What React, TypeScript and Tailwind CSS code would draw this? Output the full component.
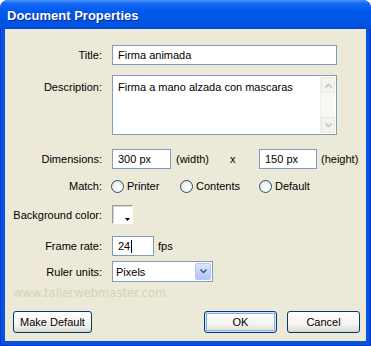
import React from 'react'

const ui = "font-['Liberation_Sans',Arial,sans-serif] text-[11px] text-black"

function Label({ children, top }: { children: React.ReactNode; top?: boolean }) {
  return (
    <div className={`w-[97px] shrink-0 text-right leading-[14px] ${top ? 'self-start pt-[5px]' : ''}`}>
      {children}
    </div>
  )
}

function TextBox({ value, w, caret }: { value: string; w: string; caret?: boolean }) {
  return (
    <div className={`${w} h-[20px] border border-[#7F9DB9] bg-white pl-[5px] flex items-center leading-[14px]`}>
      {value}
      {caret && <span className="inline-block w-px h-[13px] bg-black ml-px" />}
    </div>
  )
}

function Radio({ label, w }: { label: string; w: string }) {
  return (
    <div className={`${w} flex items-center`}>
      <span className="w-[13px] h-[13px] rounded-full border border-[#1C5180] bg-[radial-gradient(circle_at_65%_65%,#ffffff_0%,#f2f1ea_55%,#d4d2c6_100%)]" />
      <span className="ml-[3px] leading-[14px]">{label}</span>
    </div>
  )
}

function Chevron({ up, color }: { up?: boolean; color: string }) {
  return (
    <svg width="7" height="5" viewBox="0 0 7 5">
      <path
        d={up ? 'M0.5 4.5 L3.5 1.5 L6.5 4.5' : 'M0.5 0.5 L3.5 3.5 L6.5 0.5'}
        fill="none"
        stroke={color}
        strokeWidth="1.6"
      />
    </svg>
  )
}

function Button({ label, w, def }: { label: string; w: string; def?: boolean }) {
  return (
    <div
      className={`${w} h-[22px] rounded-[3px] border border-[#003C74] flex items-center justify-center bg-[linear-gradient(to_bottom,#ffffff_0%,#f4f4f0_60%,#e3e2da_90%,#d6d0c5_100%)] ${
        def ? 'shadow-[inset_0_0_0_1px_#CEE7FF,inset_0_0_0_2px_#8FA9EC]' : ''
      }`}
    >
      {label}
    </div>
  )
}

export default function App() {
  return (
    <div className={`w-[371px] h-[346px] flex flex-col rounded-t-[8px] overflow-hidden bg-[#0055E5] ${ui}`}>
      {/* Title bar */}
      <div className="h-[29px] shrink-0 flex items-center pt-[3px] pl-[7px] bg-[linear-gradient(to_bottom,#4A94F8_0%,#1668F2_12%,#0058EC_40%,#0054E3_80%,#0049D8_100%)]">
        <span className="font-['Liberation_Sans',Arial,sans-serif] font-bold text-[13px] text-white [text-shadow:1px_1px_0_#0A2A8E]">
          Document Properties
        </span>
      </div>

      <div className="flex-1 flex px-[4px] pb-[4px] border-x border-b border-[#0032C8]">
        <div className="flex-1 bg-[#ECE9D8] flex flex-col pt-[16px]">
          {/* Title */}
          <div className="flex items-center">
            <Label>Title:</Label>
            <div className="ml-[10px]">
              <TextBox value="Firma animada" w="w-[225px]" />
            </div>
          </div>

          {/* Description */}
          <div className="flex mt-[10px]">
            <Label top>Description:</Label>
            <div className="ml-[10px] w-[225px] h-[60px] border border-[#7F9DB9] bg-white flex">
              <div className="flex-1 pl-[5px] pt-[4px] leading-[14px]">Firma a mano alzada con mascaras</div>
              <div className="w-[15px] flex flex-col bg-[#F8F8F4] border-l border-[#F1EFE6] m-px">
                <div className="h-[16px] rounded-[2px] border border-[#E8E6DD] bg-[#F4F3EE] flex items-center justify-center">
                  <Chevron up color="#C9C7BA" />
                </div>
                <div className="flex-1" />
                <div className="h-[16px] rounded-[2px] border border-[#E8E6DD] bg-[#F4F3EE] flex items-center justify-center">
                  <Chevron color="#C9C7BA" />
                </div>
              </div>
            </div>
          </div>

          {/* Dimensions */}
          <div className="flex items-center mt-[14px]">
            <Label>Dimensions:</Label>
            <div className="ml-[10px] flex items-center">
              <TextBox value="300 px" w="w-[59px]" />
              <span className="w-[54px] ml-[5px] leading-[14px]">(width)</span>
              <span className="w-[29px] leading-[14px]">x</span>
              <TextBox value="150 px" w="w-[58px]" />
              <span className="ml-[4px] leading-[14px]">(height)</span>
            </div>
          </div>

          {/* Match */}
          <div className="flex items-center mt-[9px] h-[16px]">
            <Label>Match:</Label>
            <div className="ml-[9px] flex items-center">
              <Radio label="Printer" w="w-[69px]" />
              <Radio label="Contents" w="w-[79px]" />
              <Radio label="Default" w="w-[70px]" />
            </div>
          </div>

          {/* Background color */}
          <div className="flex items-center mt-[11px]">
            <Label>Background color:</Label>
            <div className="ml-[10px] w-[21px] h-[19px] bg-white border-t border-l border-[#9D9D92] border-r border-b border-r-[#FFFFFF] border-b-[#FFFFFF] shadow-[inset_1px_1px_0_#D8D6CB] relative">
              <svg className="absolute right-[2px] bottom-[2px]" width="5" height="3" viewBox="0 0 5 3">
                <path d="M0 0 H5 L2.5 3 Z" fill="#000" />
              </svg>
            </div>
          </div>

          {/* Frame rate */}
          <div className="flex items-center mt-[12px]">
            <Label>Frame rate:</Label>
            <div className="ml-[10px] flex items-center">
              <TextBox value="24" w="w-[42px]" caret />
              <span className="ml-[4px] leading-[14px]">fps</span>
            </div>
          </div>

          {/* Ruler units */}
          <div className="flex items-center mt-[5px]">
            <Label>Ruler units:</Label>
            <div className="ml-[10px] w-[101px] h-[21px] border border-[#7F9DB9] bg-white flex items-center">
              <span className="flex-1 pl-[3px] leading-[14px]">Pixels</span>
              <div className="w-[16px] h-[17px] mr-px rounded-[2px] border border-[#B3C7F0] bg-[linear-gradient(to_bottom,#DCE7FD_0%,#C1D3FB_55%,#B0C6F6_100%)] flex items-center justify-center">
                <Chevron color="#4D6185" />
              </div>
            </div>
          </div>

          {/* Watermark */}
          <div className="mt-[4px] ml-[8px] h-[14px] leading-[14px] font-['DejaVu_Sans',Verdana,sans-serif] text-[11.6px] text-[#D6D3B3]">
            www.tallerwebmaster.com
          </div>

          {/* Buttons */}
          <div className="flex items-center mt-[11px]">
            <div className="ml-[8px]">
              <Button label="Make Default" w="w-[79px]" />
            </div>
            <div className="ml-auto flex items-center mr-[6px]">
              <Button label="OK" w="w-[73px]" def />
              <div className="ml-[10px]">
                <Button label="Cancel" w="w-[73px]" />
              </div>
            </div>
          </div>
        </div>
      </div>
    </div>
  )
}
